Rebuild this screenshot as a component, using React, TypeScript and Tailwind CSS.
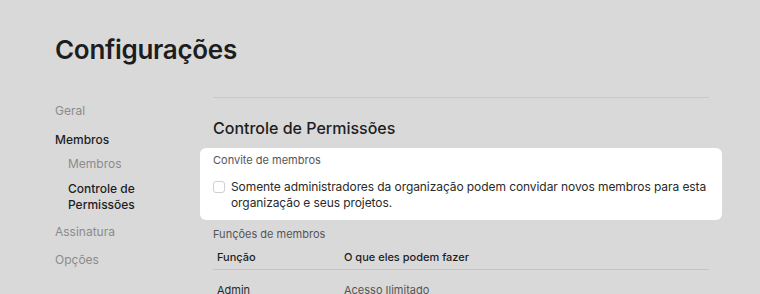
export default function App() {
  const font = { fontFamily: 'Inter, "Noto Sans", sans-serif' };
  return (
    <div className="w-[760px] h-[294px] overflow-hidden bg-[#d9d9d9] pl-[55px] pt-[33px]" style={font}>
      <h1 className="text-[26px] leading-[34px] font-semibold text-[#1d1d1f] tracking-[-0.3px]">Configurações</h1>
      <div className="mt-[30px] flex">
        <nav className="w-[158px] flex flex-col text-[12px] leading-[16px]">
          <div className="mt-[6px] text-[#8b8b8b]">Geral</div>
          <div className="mt-[13px] text-[#1d1d1f] font-medium">Membros</div>
          <div className="mt-[8px] pl-[13px] text-[#8b8b8b]">Membros</div>
          <div className="mt-[9px] pl-[13px] text-[#1d1d1f] font-medium">Controle de<br />Permissões</div>
          <div className="mt-[11px] text-[#8b8b8b]">Assinatura</div>
          <div className="mt-[12px] text-[#8b8b8b]">Opções</div>
        </nav>
        <main className="w-[496px] border-t border-[#c9c9c9]">
          <h2 className="mt-[19px] text-[16px] leading-[22px] font-medium text-[#1d1d1f]">Controle de Permissões</h2>
          <section className="mt-[9px] -mx-[13px] bg-white rounded-[6px] px-[13px] pt-[4px] pb-[9px]">
            <div className="text-[11px] leading-[16px] text-[#555]">Convite de membros</div>
            <label className="mt-[11px] flex items-start gap-[6px] text-[12px] leading-[16px] text-[#2a2a2a]">
              <span className="mt-[2px] w-[12px] h-[12px] shrink-0 rounded-[3px] border border-[#cfcfcf] bg-white"></span>
              <span className="tracking-[-0.08px]">Somente administradores da organização podem convidar novos membros para esta<br />organização e seus projetos.</span>
            </label>
          </section>
          <div className="mt-[6px] text-[11px] leading-[16px] text-[#555]">Funções de membros</div>
          <div className="mt-[7px] flex px-[4px] pb-[4px] text-[11px] leading-[16px] text-[#1d1d1f] font-medium border-b border-[#c4c4c4]">
            <div className="w-[127px]">Função</div>
            <div>O que eles podem fazer</div>
          </div>
          <div className="mt-[12px] flex px-[4px] text-[11px] leading-[16px] text-[#2a2a2a]">
            <div className="w-[127px]">Admin</div>
            <div className="text-[#555]">Acesso Ilimitado</div>
          </div>
        </main>
      </div>
    </div>
  );
}
